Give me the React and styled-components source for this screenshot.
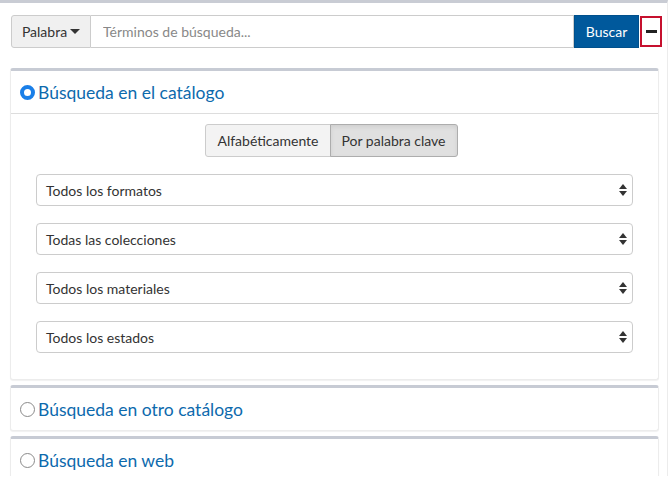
import React, { useState } from "react";
import styled, { createGlobalStyle } from "styled-components";

const GlobalStyle = createGlobalStyle`
  body {
    margin: 0;
    background: #fff;
    font-family: Lato, "Noto Sans", sans-serif;
    color: #333;
  }
`;

const Frame = styled.div`
  width: 668px;
  height: 476px;
  border-top: 3px solid #c9ccd4;
  border-right: 1px solid #ececec;
  padding: 12px 0 0 10px;
  box-sizing: border-box;
  overflow: hidden;
`;

const SearchRow = styled.div`
  display: flex;
  align-items: center;
  height: 33px;
  margin-left: 1px;
`;

const DropButton = styled.button`
  height: 33px;
  width: 80px;
  display: flex;
  align-items: center;
  justify-content: center;
  gap: 3px;
  background: #f0f0f0;
  border: 1px solid #ccc;
  border-radius: 3px 0 0 3px;
  font: 14px Lato, sans-serif;
  color: #333;
  padding: 0;
`;

const Caret = styled.span`
  width: 0;
  height: 0;
  border-left: 5px solid transparent;
  border-right: 5px solid transparent;
  border-top: 5px solid #333;
`;

const SearchInput = styled.input`
  height: 33px;
  box-sizing: border-box;
  flex: 0 0 483px;
  border: 1px solid #ccc;
  border-left: none;
  padding: 0 12px;
  font: 14px Lato, sans-serif;
  color: #333;
  outline: none;
  &::placeholder {
    color: #888;
  }
`;

const SearchButton = styled.button`
  height: 33px;
  width: 65px;
  background: #00599c;
  border: 1px solid #00508c;
  color: #fff;
  font: 14px Lato, sans-serif;
  padding: 0;
`;

const Collapse = styled.button`
  margin-left: 1px;
  width: 22px;
  height: 31px;
  box-sizing: border-box;
  border: 2px solid #c6102e;
  background: #fff;
  display: flex;
  align-items: center;
  justify-content: center;
  padding: 0;
  &::before {
    content: "";
    width: 11px;
    height: 3px;
    background: #222;
  }
`;

const Panels = styled.div`
  margin-top: 20px;
  width: 649px;
  display: flex;
  flex-direction: column;
  gap: 5px;
`;

const Panel = styled.section`
  background: #fff;
  border: 1px solid #ececec;
  border-top: 3px solid #c7cbd4;
  border-radius: 3px;
  box-shadow: 0 1px 1px rgba(0, 0, 0, 0.06);
`;

const PanelHeader = styled.div`
  display: flex;
  align-items: center;
  gap: 3px;
  height: 42px;
  padding-left: 9px;
  border-bottom: ${(p) => (p.$open ? "1px solid #ddd" : "none")};
  color: #0d6aad;
  font-size: 17.5px;
`;

const Radio = styled.span`
  width: 15px;
  height: 15px;
  box-sizing: border-box;
  border-radius: 50%;
  border: ${(p) => (p.$checked ? "4px solid #1a7fe8" : "1px solid #8a8a8a")};
  background: #fff;
`;

const PanelBody = styled.div`
  padding: 10px 25px 26px 25px;
  display: flex;
  flex-direction: column;
  gap: 17px;
`;

const ToggleGroup = styled.div`
  display: flex;
  justify-content: center;
  margin-left: -6px;
`;

const Toggle = styled.button`
  height: 33px;
  padding: 0 11px;
  font: 14px Lato, sans-serif;
  color: #333;
  background: ${(p) => (p.$active ? "#e0e0e0" : "#f3f3f3")};
  border: 1px solid ${(p) => (p.$active ? "#adadad" : "#ccc")};
  box-shadow: ${(p) => (p.$active ? "inset 0 2px 4px rgba(0,0,0,0.08)" : "none")};
  border-radius: ${(p) => (p.$first ? "3px 0 0 3px" : "0 3px 3px 0")};
  margin-left: ${(p) => (p.$first ? "0" : "-1px")};
`;

const SelectBox = styled.div`
  height: 32px;
  box-sizing: border-box;
  border: 1px solid #ccc;
  border-radius: 4px;
  display: flex;
  align-items: center;
  justify-content: space-between;
  padding: 0 5px 0 9px;
  font-size: 14px;
  color: #333;
`;

const Arrows = styled.span`
  display: flex;
  flex-direction: column;
  gap: 2px;
  &::before,
  &::after {
    content: "";
    width: 0;
    height: 0;
    border-left: 4px solid transparent;
    border-right: 4px solid transparent;
  }
  &::before {
    border-bottom: 5px solid #333;
  }
  &::after {
    border-top: 5px solid #333;
  }
`;

const selects = [
  "Todos los formatos",
  "Todas las colecciones",
  "Todos los materiales",
  "Todos los estados",
];

export default function App() {
  const [mode, setMode] = useState("clave");

  return (
    <>
      <GlobalStyle />
      <Frame>
        <SearchRow>
          <DropButton>
            Palabra <Caret />
          </DropButton>
          <SearchInput placeholder="Términos de búsqueda..." />
          <SearchButton>Buscar</SearchButton>
          <Collapse aria-label="Contraer" />
        </SearchRow>

        <Panels>
          <Panel>
            <PanelHeader $open>
              <Radio $checked />
              Búsqueda en el catálogo
            </PanelHeader>
            <PanelBody>
              <ToggleGroup>
                <Toggle $first $active={mode === "alfa"} onClick={() => setMode("alfa")}>
                  Alfabéticamente
                </Toggle>
                <Toggle $active={mode === "clave"} onClick={() => setMode("clave")}>
                  Por palabra clave
                </Toggle>
              </ToggleGroup>
              {selects.map((s) => (
                <SelectBox key={s}>
                  {s}
                  <Arrows />
                </SelectBox>
              ))}
            </PanelBody>
          </Panel>

          <Panel>
            <PanelHeader>
              <Radio />
              Búsqueda en otro catálogo
            </PanelHeader>
          </Panel>

          <Panel>
            <PanelHeader>
              <Radio />
              Búsqueda en web
            </PanelHeader>
          </Panel>
        </Panels>
      </Frame>
    </>
  );
}
